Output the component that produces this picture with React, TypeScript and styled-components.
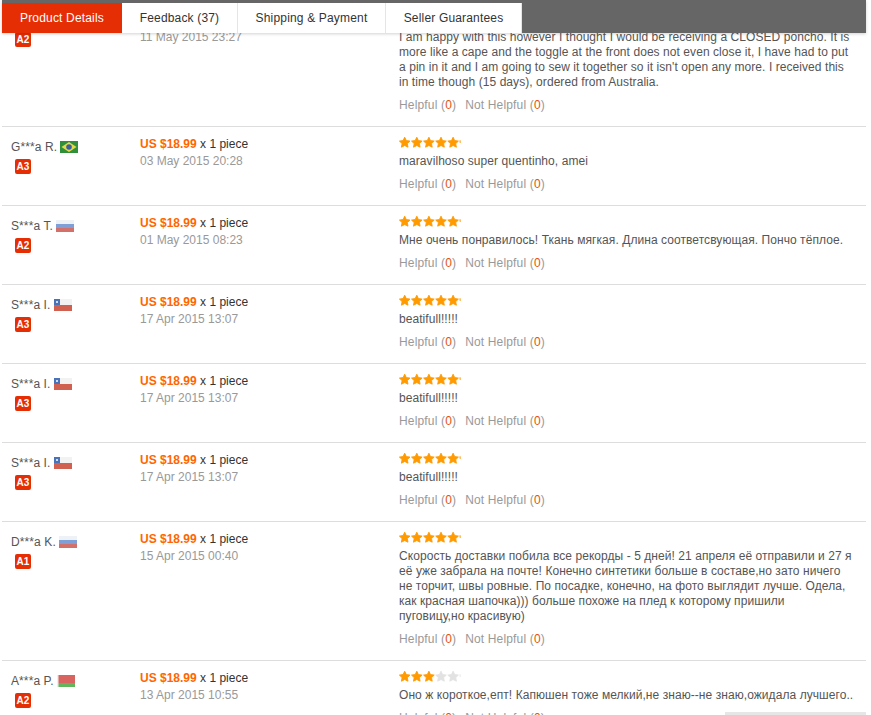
import React from "react";
import styled, { createGlobalStyle } from "styled-components";

const Global = createGlobalStyle`
  html, body { margin: 0; padding: 0; background: #fff; height: 100%; overflow: hidden; }
  #root { height: 100%; }
`;

const Page = styled.div`
  position: relative;
  width: 871px;
  height: 715px;
  overflow: hidden;
  font-family: "Liberation Sans", Arial, sans-serif;
  font-size: 12px;
  color: #666;
`;

const TabBar = styled.div`
  position: absolute;
  top: 0;
  left: 2px;
  width: 864px;
  height: 33px;
  padding-top: 3px;
  box-sizing: border-box;
  display: flex;
  background: #666;
  box-shadow: 0 1px 3px rgba(0, 0, 0, 0.18);
  z-index: 2;
`;

const Tab = styled.div<{ $active?: boolean; $w: number }>`
  width: ${(p) => p.$w}px;
  box-sizing: border-box;
  display: flex;
  align-items: center;
  justify-content: center;
  height: 30px;
  font-size: 12px;
  letter-spacing: 0.17px;
  color: ${(p) => (p.$active ? "#fff" : "#333")};
  background: ${(p) => (p.$active ? "#e62e04" : "#fff")};
  border-right: ${(p) => (p.$active ? "none" : "1px solid #e5e5e5")};
`;

const List = styled.div`
  width: 864px;
  margin-left: 2px;
  padding-top: 3px;
`;

const Row = styled.div`
  display: grid;
  grid-template-columns: 138px 259px 1fr;
  padding: 9px 0 13px;
  border-bottom: 1px solid #ddd;
`;

const Buyer = styled.div`
  padding-left: 9px;
`;

const Name = styled.div<{ $short?: boolean }>`
  display: flex;
  align-items: center;
  gap: 3px;
  height: ${(p) => (p.$short ? 15 : 18)}px;
  color: #555;
  margin-top: 2px;
  font-size: 12px;
  letter-spacing: 0.1px;
`;

const Badge = styled.span`
  display: inline-flex;
  align-items: center;
  justify-content: center;
  width: 16px;
  height: 15px;
  margin: 3px 0 0 4px;
  background: #e62e04;
  border-radius: 2px;
  color: #fff;
  font-size: 10px;
  font-weight: bold;
`;

const Order = styled.div`
  padding-top: 1px;
  line-height: 18px;
`;

const Price = styled.div`
  color: #333;
  line-height: 15px;
`;

const Amount = styled.b`
  color: #f60;
`;

const When = styled.div`
  color: #999;
  line-height: 15px;
  margin-top: 2px;
`;

const Review = styled.div`
  padding-right: 6px;
`;

const Stars = styled.svg`
  display: block;
  width: 66px;
  height: 14px;
`;

const Body = styled.div`
  color: #555;
  line-height: 15px;
  margin-top: 4px;
  letter-spacing: 0.065px;
`;

const Votes = styled.div`
  display: flex;
  gap: 9px;
  color: #999;
  line-height: 15px;
  margin-top: 8px;
  letter-spacing: 0.16px;
`;

const Zero = styled.span`
  color: #e8500a;
`;

const Corner = styled.div`
  position: absolute;
  left: 725px;
  top: 712px;
  width: 141px;
  height: 3px;
  background: #e6e6e6;
`;

const starPath = (x: number) =>
  `M${x + 5.7} 1.2 L${x + 7.3} 4.6 L${x + 11} 5.1 L${x + 8.3} 7.6 L${x + 9} 11.2 L${x + 5.7} 9.5 L${x + 2.4} 11.2 L${x + 3.1} 7.6 L${x + 0.4} 5.1 L${x + 4.1} 4.6 Z`;

const StarRow = ({ n }: { n: number }) => (
  <Stars viewBox="0 0 66 14">
    {[0, 1, 2, 3, 4].map((i) => (
      <path
        key={i}
        d={starPath(i * 12.1)}
        fill={i < n ? "#ff9a00" : "#e2e2e2"}
        stroke={i < n ? "#ff9a00" : "#e2e2e2"}
        strokeWidth="0.9"
        strokeLinejoin="round"
      />
    ))}
    <path d="M60.4 4.5 L61.6 4.2 L61.6 7 L60.8 7 Z" fill={n >= 5 ? "#ff9a00" : "#e8e8e8"} />
  </Stars>
);

const FlagBox = styled.svg`
  width: 18px;
  height: 12px;
  display: block;
  flex: none;
`;

const Flag = ({ c }: { c: string }) => {
  if (c === "br")
    return (
      <FlagBox viewBox="0 0 18 12">
        <rect width="18" height="12" fill="#2f8f3a" />
        <path d="M9 1 L16.5 6 L9 11 L1.5 6 Z" fill="#e4d94a" />
        <circle cx="9" cy="6" r="2.8" fill="#3a5f9e" />
      </FlagBox>
    );
  if (c === "ru")
    return (
      <FlagBox viewBox="0 0 18 12">
        <rect width="18" height="4" fill="#eef1f6" />
        <rect y="4" width="18" height="4" fill="#7f9fd6" />
        <rect y="8" width="18" height="4" fill="#d4706a" />
      </FlagBox>
    );
  if (c === "cl")
    return (
      <FlagBox viewBox="0 0 18 12">
        <rect width="18" height="6" fill="#f2f2f2" />
        <rect y="6" width="18" height="6" fill="#d0604f" />
        <rect width="6" height="6" fill="#4a72b8" />
        <circle cx="3" cy="3" r="1" fill="#fff" />
      </FlagBox>
    );
  return (
    <FlagBox viewBox="0 0 18 12">
      <rect width="18" height="8" fill="#d9645f" />
      <rect y="8" width="18" height="4" fill="#63b55c" />
      <rect width="1.5" height="12" fill="#eee" />
    </FlagBox>
  );
};

type R = {
  name: string;
  flag: string;
  level: string;
  date: string;
  stars: number;
  text: string[];
  short?: boolean;
};

const rows: R[] = [
  {
    name: "",
    flag: "",
    level: "A2",
    date: "11 May 2015 23:27",
    stars: 5,
    short: true,
    text: [
      "I am happy with this however I thought I would be receiving a CLOSED poncho. It is",
      "more like a cape and the toggle at the front does not even close it, I have had to put",
      "a pin in it and I am going to sew it together so it isn't open any more. I received this",
      "in time though (15 days), ordered from Australia.",
    ],
  },
  { name: "G***a R.", flag: "br", level: "A3", date: "03 May 2015 20:28", stars: 5, text: ["maravilhoso super quentinho, amei"] },
  { name: "S***a T.", flag: "ru", level: "A2", date: "01 May 2015 08:23", stars: 5, text: ["Мне очень понравилось! Ткань мягкая. Длина соответсвующая. Пончо тёплое."] },
  { name: "S***a I.", flag: "cl", level: "A3", date: "17 Apr 2015 13:07", stars: 5, text: ["beatifull!!!!!"] },
  { name: "S***a I.", flag: "cl", level: "A3", date: "17 Apr 2015 13:07", stars: 5, text: ["beatifull!!!!!"] },
  { name: "S***a I.", flag: "cl", level: "A3", date: "17 Apr 2015 13:07", stars: 5, text: ["beatifull!!!!!"] },
  {
    name: "D***a K.",
    flag: "ru",
    level: "A1",
    date: "15 Apr 2015 00:40",
    stars: 5,
    text: [
      "Скорость доставки побила все рекорды - 5 дней! 21 апреля её отправили и 27 я",
      "её уже забрала на почте! Конечно синтетики больше в составе,но зато ничего",
      "не торчит, швы ровные. По посадке, конечно, на фото выглядит лучше. Одела,",
      "как красная шапочка))) больше похоже на плед к которому пришили",
      "пуговицу,но красивую)",
    ],
  },
  { name: "A***a P.", flag: "by", level: "A2", date: "13 Apr 2015 10:55", stars: 3, text: ["Оно ж короткое,епт! Капюшен тоже мелкий,не знаю--не знаю,ожидала лучшего.."] },
];

export default function App() {
  return (
    <Page>
      <Global />
      <TabBar>
        <Tab $active $w={120}>Product Details</Tab>
        <Tab $w={116}>Feedback (37)</Tab>
        <Tab $w={148}>Shipping &amp; Payment</Tab>
        <Tab $w={136}>Seller Guarantees</Tab>
      </TabBar>
      <List>
        {rows.map((r, i) => (
          <Row key={i}>
            <Buyer>
              <Name $short={r.short}>
                {r.name}
                {r.flag && <Flag c={r.flag} />}
              </Name>
              <Badge>{r.level}</Badge>
            </Buyer>
            <Order>
              <Price>
                <Amount>US $18.99</Amount> x 1 piece
              </Price>
              <When>{r.date}</When>
            </Order>
            <Review>
              <StarRow n={r.stars} />
              <Body>
                {r.text.map((t) => (
                  <div key={t}>{t}</div>
                ))}
              </Body>
              <Votes>
                <span>Helpful (<Zero>0</Zero>)</span>
                <span>Not Helpful (<Zero>0</Zero>)</span>
              </Votes>
            </Review>
          </Row>
        ))}
      </List>
      <Corner />
    </Page>
  );
}
